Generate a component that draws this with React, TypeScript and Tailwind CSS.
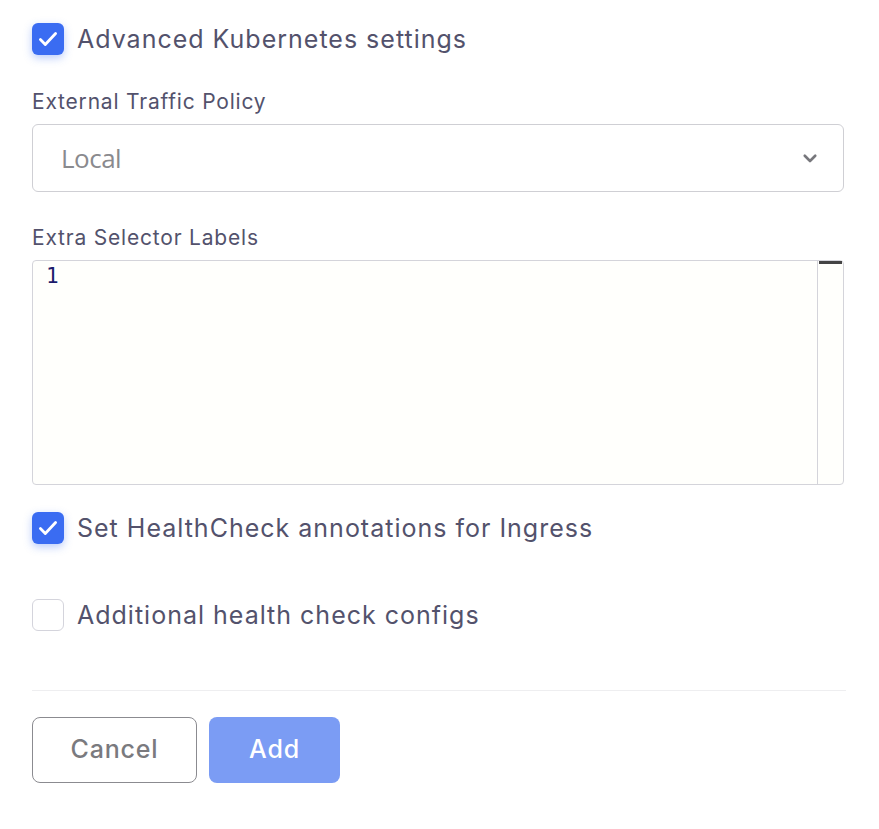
import React from "react";

const font = { fontFamily: "Inter, 'Noto Sans', sans-serif" };

const Check = ({ checked, label }: { checked: boolean; label: string }) => (
  <label className="flex items-center gap-[13px] h-[32px] cursor-pointer">
    {checked ? (
      <span className="w-[32px] h-[32px] rounded-[6px] bg-[#3a6cf2] flex items-center justify-center shadow-[0_3px_8px_rgba(58,108,242,0.35)]">
        <svg width="26" height="26" viewBox="0 0 24 24" fill="none" stroke="white" strokeWidth="2.6" strokeLinecap="round" strokeLinejoin="round">
          <path d="M5 12.5l4.5 4.5L19 7" />
        </svg>
      </span>
    ) : (
      <span className="w-[32px] h-[32px] rounded-[6px] border border-[#d4d4dc] bg-white" />
    )}
    <span className="text-[25px] leading-[32px] text-[#53526c] tracking-[1px]">{label}</span>
  </label>
);

export default function App() {
  return (
    <div className="bg-white w-[879px] h-[829px] pl-[32px] pr-[35px] pt-[23px]" style={font}>
      <Check checked label="Advanced Kubernetes settings" />

      <div className="mt-[35px] text-[21px] text-[#53526c] leading-[24px] tracking-[0.8px]">External Traffic Policy</div>
      <div className="mt-[10px] h-[68px] border border-[#cfcfd4] rounded-[6px] flex items-center justify-between pl-[28px] pr-[24px]">
        <span className="text-[26px] text-[#8a8a8e] tracking-[-0.5px]" style={{ fontFamily: "'Open Sans', sans-serif" }}>
          Local
        </span>
        <svg width="18" height="18" viewBox="0 0 24 24" fill="none" stroke="#77777c" strokeWidth="3.5" strokeLinecap="round" strokeLinejoin="round">
          <path d="M5 9l7 7 7-7" />
        </svg>
      </div>

      <div className="mt-[34px] text-[21px] text-[#53526c] leading-[24px] tracking-[0.8px]">Extra Selector Labels</div>
      <div className="mt-[10px] h-[225px] border border-[#d4d4da] rounded-[4px] bg-[#fffffc] flex">
        <div className="flex-1 pl-[13px] pt-[1px] text-[21px] leading-[28px] text-[#1b1a6b]" style={{ fontFamily: "'DejaVu Sans Mono', monospace" }}>
          1
        </div>
        <div className="w-[26px] border-l border-[#d4d4da] flex flex-col">
          <div className="h-[3px] bg-[#444] ml-[1px] mr-[1px]" />
        </div>
      </div>

      <div className="mt-[27px]">
        <Check checked label="Set HealthCheck annotations for Ingress" />
      </div>
      <div className="mt-[55px]">
        <Check checked={false} label="Additional health check configs" />
      </div>

      <div className="mt-[59px] border-t border-[#eeeef0] mr-[-2px]" />

      <div className="mt-[26px] flex gap-[12px]">
        <button className="w-[165px] h-[66px] rounded-[8px] border border-[#8b8b90] text-[25px] font-medium text-[#7a7a7e] bg-white tracking-[0.8px]">
          Cancel
        </button>
        <button className="w-[131px] h-[66px] rounded-[8px] bg-[#7b9cf4] text-[25px] font-medium text-white tracking-[0.8px]">
          Add
        </button>
      </div>
    </div>
  );
}
